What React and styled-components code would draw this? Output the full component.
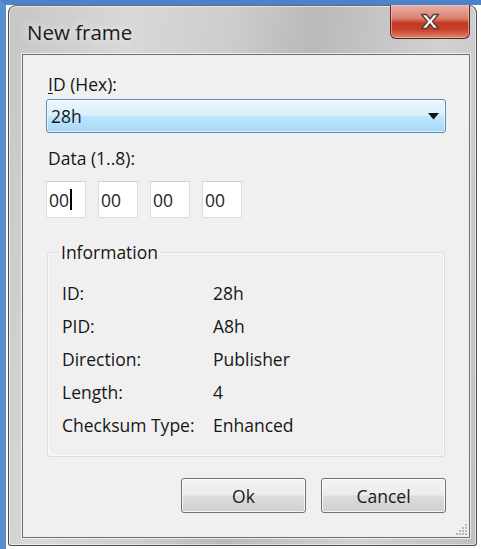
import React from 'react'
import styled, { createGlobalStyle } from 'styled-components'

const GlobalStyle = createGlobalStyle`
  html, body {
    margin: 0;
    padding: 0;
    background: #ffffff;
  }
  body {
    font-family: 'Open Sans', 'Noto Sans', 'DejaVu Sans', sans-serif;
    color: #161616;
  }
`

const Desktop = styled.div`
  width: 481px;
  height: 549px;
  box-sizing: border-box;
  border-top: 5px solid #4a83c8;
  border-left: 6px solid #5b90d0;
  padding: 0 4px 0 2px;
  overflow: hidden;
`

const Window = styled.div`
  position: relative;
  width: 469px;
  height: 541px;
  box-sizing: border-box;
  display: flex;
  flex-direction: column;
  border: 1px solid #4f4f4f;
  border-top-color: #6a6a6a;
  border-radius: 8px 8px 3px 3px;
  background: linear-gradient(
    100deg,
    #c6c6c6 0%,
    #d8d8d8 22%,
    #cdcdcd 40%,
    #b9b9b9 55%,
    #d1d1d1 78%,
    #c0c0c0 100%
  );
  box-shadow: inset 0 0 0 1px rgba(255, 255, 255, 0.55);
`

const TitleBar = styled.div`
  height: 48px;
  display: flex;
  align-items: flex-start;
  justify-content: space-between;
  padding: 0 6px 0 18px;
`

const Title = styled.div`
  margin-top: 12px;
  font-size: 20.5px;
  color: #1a1a1a;
  text-shadow: 0 0 8px rgba(255, 255, 255, 0.9);
`

const CloseButton = styled.button`
  width: 80px;
  height: 34px;
  margin-top: -1px;
  padding: 0;
  display: flex;
  align-items: center;
  justify-content: center;
  border: 1px solid #5a2620;
  border-top: none;
  border-radius: 0 0 6px 6px;
  background: linear-gradient(
    to bottom,
    #e9b0a6 0%,
    #dc8171 40%,
    #c23a24 55%,
    #c9412a 75%,
    #e0866f 100%
  );
  box-shadow: inset 0 0 0 1px rgba(255, 210, 200, 0.5);
  cursor: pointer;
`

const Client = styled.div`
  position: relative;
  flex: 1;
  margin: 0 6px 7px 13px;
  padding: 18px 23px 0 23px;
  box-sizing: border-box;
  background: #f0f0f0;
  border: 1px solid #6d6d6d;
  box-shadow: 0 0 0 1px rgba(255, 255, 255, 0.7);
  display: flex;
  flex-direction: column;
  font-size: 17.5px;
`

const FieldLabel = styled.div`
  line-height: 22px;
  height: 22px;
  margin-left: 2px;
  margin-top: ${(p) => p.$top || 0}px;
`

const Underlined = styled.span`
  text-decoration: underline;
  text-underline-offset: 2px;
`

const Combo = styled.div`
  margin-top: 4px;
  height: 34px;
  box-sizing: border-box;
  display: flex;
  align-items: center;
  justify-content: space-between;
  padding: 0 6px 0 4px;
  border: 1px solid #5f8eb5;
  border-radius: 3px;
  background: linear-gradient(to bottom, #eaf6fd 0%, #d9f0fc 48%, #bee6fd 52%, #a7d9f5 100%);
  box-shadow: inset 0 0 0 1px rgba(255, 255, 255, 0.6);
`

const InputRow = styled.div`
  margin-top: 12px;
  display: flex;
  gap: 12px;
`

const ByteBox = styled.div`
  position: relative;
  width: 40px;
  height: 37px;
  box-sizing: border-box;
  display: flex;
  align-items: center;
  padding-left: 2px;
  background: #ffffff;
  border: 1px solid #dcdcdc;
  border-top-color: #cfcfcf;
  color: #1e1e1e;
`

const Caret = styled.span`
  display: inline-block;
  width: 1.5px;
  height: 21px;
  margin-left: 1px;
  background: #000;
`

const Group = styled.fieldset`
  margin: 22px 1px 0 1px;
  padding: 0 0 15px 14px;
  border: 1px solid #d9dee2;
  border-radius: 3px;
  box-shadow: inset 0 0 0 1px rgba(255, 255, 255, 0.7);
`

const Legend = styled.legend`
  padding: 0 2px;
  margin-left: -3px;
`

const InfoGrid = styled.div`
  margin-top: 12px;
  display: grid;
  grid-template-columns: 151px auto;
  grid-auto-rows: 33px;
  align-items: center;
`

const ButtonRow = styled.div`
  margin-top: 21px;
  display: flex;
  justify-content: flex-end;
  gap: 15px;
`

const PushButton = styled.button`
  width: 125px;
  height: 35px;
  padding: 0;
  font-family: inherit;
  font-size: 17.5px;
  color: #1a1a1a;
  border: 1px solid #707070;
  border-radius: 3px;
  background: linear-gradient(to bottom, #f3f3f3 0%, #ececec 48%, #dddddd 52%, #cfcfcf 100%);
  box-shadow: inset 0 0 0 1px rgba(255, 255, 255, 0.8);
  cursor: pointer;
`

const Grip = styled.svg`
  position: absolute;
  right: 2px;
  bottom: 2px;
`

const info = [
  ['ID:', '28h'],
  ['PID:', 'A8h'],
  ['Direction:', 'Publisher'],
  ['Length:', '4'],
  ['Checksum Type:', 'Enhanced'],
]

const CloseGlyph = () => (
  <svg width="24" height="19" viewBox="0 0 24 19">
    <path
      d="M3.5 2.5 L8.5 2.5 L12 7 L15.5 2.5 L20.5 2.5 L14.5 9.5 L20.5 16.5 L15.5 16.5 L12 12 L8.5 16.5 L3.5 16.5 L9.5 9.5 Z"
      fill="#f6f6f6"
      stroke="#5a3a36"
      strokeWidth="1.3"
      strokeLinejoin="round"
    />
  </svg>
)

const DropArrow = () => (
  <svg width="11" height="7" viewBox="0 0 11 7">
    <path d="M0 0 H11 L5.5 6.5 Z" fill="#111" />
  </svg>
)

const ResizeGrip = () => (
  <Grip width="12" height="12" viewBox="0 0 12 12">
    {[
      [9, 1],
      [6, 4],
      [9, 4],
      [3, 7],
      [6, 7],
      [9, 7],
      [0, 10],
      [3, 10],
      [6, 10],
      [9, 10],
    ].map(([x, y]) => (
      <rect key={`${x}-${y}`} x={x + 1} y={y} width="2" height="2" fill="#b8b8b8" />
    ))}
  </Grip>
)

const App = () => {
  const bytes = ['00', '00', '00', '00']

  return (
    <>
      <GlobalStyle />
      <Desktop>
        <Window>
          <TitleBar>
            <Title>New frame</Title>
            <CloseButton aria-label="Close">
              <CloseGlyph />
            </CloseButton>
          </TitleBar>

          <Client>
            <FieldLabel>
              <Underlined>I</Underlined>D (Hex):
            </FieldLabel>
            <Combo>
              <span>28h</span>
              <DropArrow />
            </Combo>

            <FieldLabel $top={14}>Data (1..8):</FieldLabel>
            <InputRow>
              {bytes.map((b, i) => (
                <ByteBox key={i}>
                  {b}
                  {i === 0 && <Caret />}
                </ByteBox>
              ))}
            </InputRow>

            <Group>
              <Legend>Information</Legend>
              <InfoGrid>
                {info.map(([label, value]) => (
                  <React.Fragment key={label}>
                    <span>{label}</span>
                    <span>{value}</span>
                  </React.Fragment>
                ))}
              </InfoGrid>
            </Group>

            <ButtonRow>
              <PushButton>Ok</PushButton>
              <PushButton>Cancel</PushButton>
            </ButtonRow>

            <ResizeGrip />
          </Client>
        </Window>
      </Desktop>
    </>
  )
}

export default App
